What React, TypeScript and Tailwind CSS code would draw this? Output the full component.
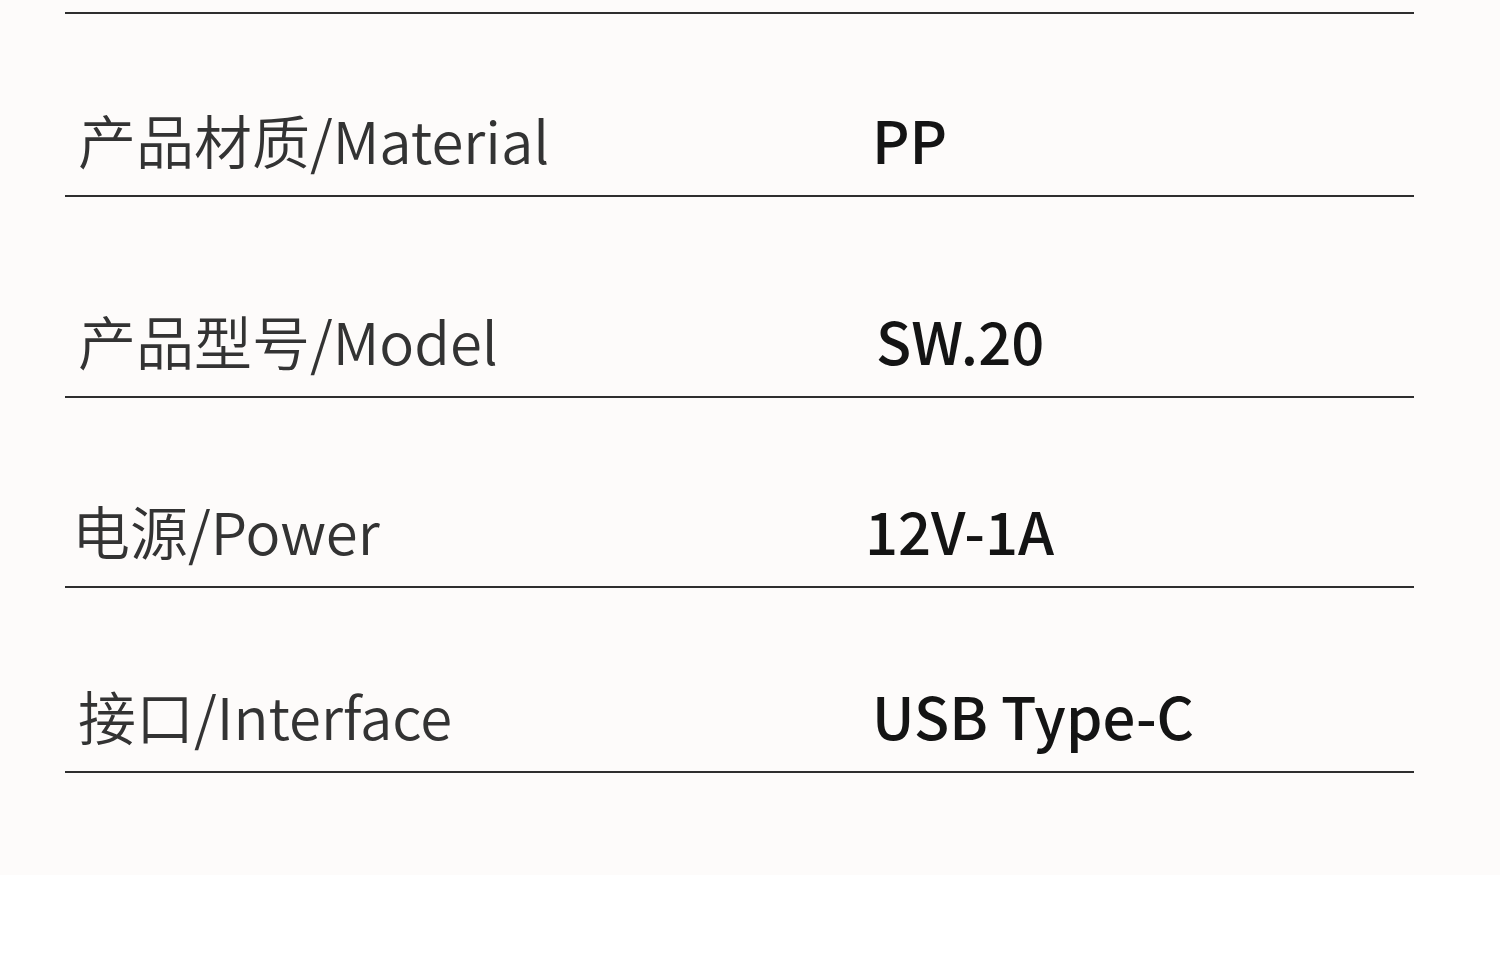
const rows = [
  { label: "产品材质/Material", value: "PP", h: "h-[183px]", lx: "pl-[13px]", vx: "w-[807px]" },
  { label: "产品型号/Model", value: "SW.20", h: "h-[201px]", lx: "pl-[13px]", vx: "w-[811px]" },
  { label: "电源/Power", value: "12V-1A", h: "h-[190px]", lx: "pl-[7px]", vx: "w-[800px]" },
  { label: "接口/Interface", value: "USB Type-C", h: "h-[185px]", lx: "pl-[13px]", vx: "w-[807px]" },
];

export default function App() {
  return (
    <div
      className="min-h-[965px] w-[1500px] bg-white"
      style={{ fontFamily: '"Noto Sans CJK SC", "Noto Sans", sans-serif' }}
    >
      <div className="h-[875px] bg-[#fdfbfa] pt-[12px]">
        <div className="ml-[65px] w-[1349px] border-t-2 border-[#2e2e2e]">
          {rows.map((r) => (
            <div
              key={r.label}
              className={`flex items-end border-b-2 border-[#2e2e2e] pb-[27px] ${r.h}`}
            >
              <div className={`${r.vx} ${r.lx} shrink-0 text-[58px] leading-none font-[350] text-[#333]`}>
                {r.label}
              </div>
              <div className="text-[58px] leading-none font-[450] text-[#141414]">{r.value}</div>
            </div>
          ))}
        </div>
      </div>
    </div>
  );
}
